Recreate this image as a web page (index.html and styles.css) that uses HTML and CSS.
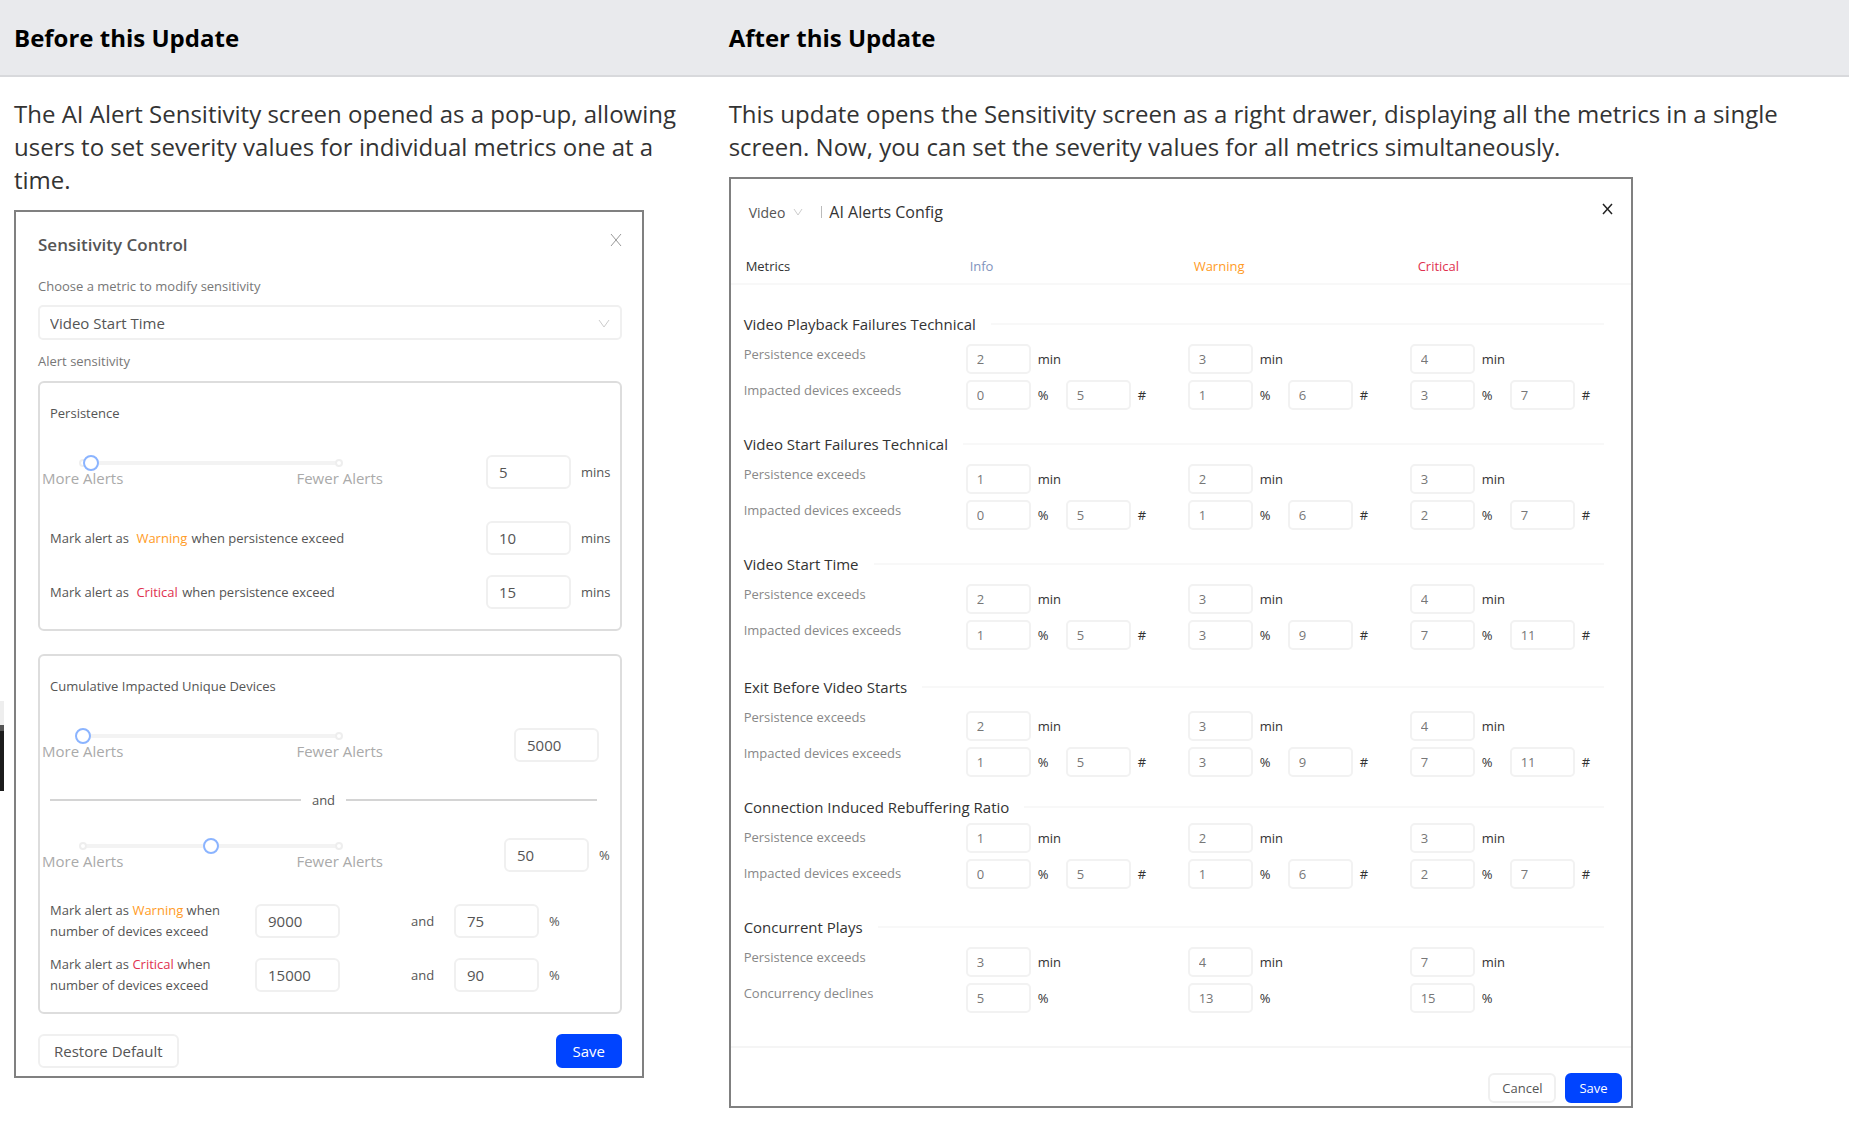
FILE: index.html
```html
<!DOCTYPE html>
<html lang="en">

<head>
    <meta charset="UTF-8">
    <meta name="viewport" content="width=device-width, initial-scale=1.0">
    <title>AI Alerts Sensitivity Update</title>
    <link rel="stylesheet" href="styles.css">
</head>

<body>

    <div class="edge-tab"></div>

    <table class="compare">
        <thead>
            <tr>
                <th class="col-before">Before this Update</th>
                <th>After this Update</th>
            </tr>
        </thead>
        <tbody>
            <tr>
                <td>
                    <p class="intro">The AI Alert Sensitivity screen opened as a pop-up, allowing users to set severity values for individual metrics one at a time.</p>

                    <div class="popup">
                        <div class="popup-head">
                            <h2>Sensitivity Control</h2>
                            <button class="close" aria-label="Close">
                                <svg width="12" height="14" viewBox="0 0 12 14"><path d="M1 1l10 12M11 1L1 13" /></svg>
                            </button>
                        </div>

                        <label class="caption" for="metric">Choose a metric to modify sensitivity</label>
                        <div class="select-wrap">
                            <select id="metric">
                                <option>Video Start Time</option>
                            </select>
                            <svg class="chevron" width="12" height="9" viewBox="0 0 12 9"><path d="M1 1l5 7 5-7" /></svg>
                        </div>
                        <p class="caption sub">Alert sensitivity</p>

                        <div class="box">
                            <h3>Persistence</h3>
                            <div class="slide-row">
                                <div class="slide">
                                    <div class="slider"><input type="range" value="3" aria-label="Persistence"></div>
                                    <div class="ends"><span>More Alerts</span><span>Fewer Alerts</span></div>
                                </div>
                                <div class="value"><input type="text" id="pInfo" value="5"><label class="unit" for="pInfo">mins</label></div>
                            </div>
                            <div class="mark-row">
                                <label for="pWarn">Mark alert as <span class="wide warning">Warning</span> when persistence exceed</label>
                                <div class="value"><input type="text" id="pWarn" value="10"><span class="unit">mins</span></div>
                            </div>
                            <div class="mark-row">
                                <label for="pCrit">Mark alert as <span class="wide critical">Critical</span> when persistence exceed</label>
                                <div class="value"><input type="text" id="pCrit" value="15"><span class="unit">mins</span></div>
                            </div>
                        </div>

                        <div class="box devices">
                            <h3>Cumulative Impacted Unique Devices</h3>
                            <div class="slide-row count">
                                <div class="slide">
                                    <div class="slider"><input type="range" value="0" aria-label="Number of devices"></div>
                                    <div class="ends"><span>More Alerts</span><span>Fewer Alerts</span></div>
                                </div>
                                <div class="value"><input type="text" value="5000" aria-label="Number of devices"></div>
                            </div>
                            <div class="and-line"><span>and</span></div>
                            <div class="slide-row percent">
                                <div class="slide">
                                    <div class="slider"><input type="range" value="50" aria-label="Percent of devices"></div>
                                    <div class="ends"><span>More Alerts</span><span>Fewer Alerts</span></div>
                                </div>
                                <div class="value"><input type="text" id="dPct" value="50"><label class="unit" for="dPct">%</label></div>
                            </div>
                            <div class="pair-row">
                                <label for="dWarn">Mark alert as <span class="warning">Warning</span> when<br>number of devices exceed</label>
                                <input type="text" id="dWarn" value="9000">
                                <label class="and" for="dWarnPct">and</label>
                                <input type="text" id="dWarnPct" value="75">
                                <span class="unit">%</span>
                            </div>
                            <div class="pair-row">
                                <label for="dCrit">Mark alert as <span class="critical">Critical</span> when<br>number of devices exceed</label>
                                <input type="text" id="dCrit" value="15000">
                                <label class="and" for="dCritPct">and</label>
                                <input type="text" id="dCritPct" value="90">
                                <span class="unit">%</span>
                            </div>
                        </div>

                        <div class="popup-foot">
                            <button class="btn">Restore Default</button>
                            <button class="btn primary">Save</button>
                        </div>
                    </div>
                </td>

                <td>
                    <p class="intro">This update opens the Sensitivity screen as a right drawer, displaying all the metrics in a single screen. Now, you can set the severity values for all metrics simultaneously.</p>

                    <div class="drawer">
                        <div class="drawer-head">
                            <button class="product">Video
                                <svg class="chevron" width="10" height="8" viewBox="0 0 10 8"><path d="M1 1l4 6 4-6" /></svg>
                            </button>
                            <span class="bar"></span>
                            <h2>AI Alerts Config</h2>
                            <button class="close dark" aria-label="Close">
                                <svg width="11" height="12" viewBox="0 0 11 12"><path d="M1 1l9 10M10 1L1 11" /></svg>
                            </button>
                        </div>

                        <div class="levels">
                            <span>Metrics</span>
                            <span class="info">Info</span>
                            <span class="warning">Warning</span>
                            <span class="critical">Critical</span>
                        </div>

                        <div class="metrics" id="metrics"></div>

                        <div class="drawer-foot">
                            <button class="btn">Cancel</button>
                            <button class="btn primary">Save</button>
                        </div>
                    </div>
                </td>
            </tr>
        </tbody>
    </table>

    <script>
        // Each row: label, units, then the values for info, warning and critical
        const metrics = [
            {
                name: "Video Playback Failures Technical",
                rows: [
                    ["Persistence exceeds", ["min"], [[2], [3], [4]]],
                    ["Impacted devices exceeds", ["%", "#"], [[0, 5], [1, 6], [3, 7]]]
                ]
            },
            {
                name: "Video Start Failures Technical",
                rows: [
                    ["Persistence exceeds", ["min"], [[1], [2], [3]]],
                    ["Impacted devices exceeds", ["%", "#"], [[0, 5], [1, 6], [2, 7]]]
                ]
            },
            {
                name: "Video Start Time",
                rows: [
                    ["Persistence exceeds", ["min"], [[2], [3], [4]]],
                    ["Impacted devices exceeds", ["%", "#"], [[1, 5], [3, 9], [7, 11]]]
                ]
            },
            {
                name: "Exit Before Video Starts",
                spacing: "loose",
                rows: [
                    ["Persistence exceeds", ["min"], [[2], [3], [4]]],
                    ["Impacted devices exceeds", ["%", "#"], [[1, 5], [3, 9], [7, 11]]]
                ]
            },
            {
                name: "Connection Induced Rebuffering Ratio",
                spacing: "tight",
                rows: [
                    ["Persistence exceeds", ["min"], [[1], [2], [3]]],
                    ["Impacted devices exceeds", ["%", "#"], [[0, 5], [1, 6], [2, 7]]]
                ]
            },
            {
                name: "Concurrent Plays",
                rows: [
                    ["Persistence exceeds", ["min"], [[3], [4], [7]]],
                    ["Concurrency declines", ["%"], [[5], [13], [15]]]
                ]
            }
        ];

        function rowHtml(row, id) {
            const [label, units, levels] = row;
            const cells = levels.map((values, level) => {
                const fields = values.map((value, i) => {
                    const fieldId = `${id}-${level}-${i}`;
                    return `<input type="text" id="${fieldId}" value="${value}" aria-label="${label} ${units[i]}"><span class="unit">${units[i]}</span>`;
                });
                return `<div class="cell">${fields.join("")}</div>`;
            });
            return `<div class="row"><label for="${id}-0-0">${label}</label>${cells.join("")}</div>`;
        }

        document.getElementById("metrics").innerHTML = metrics.map((metric, m) => `
            <section class="metric ${metric.spacing || ""}">
                <h3>${metric.name}</h3>
                ${metric.rows.map((row, r) => rowHtml(row, `m${m}-${r}`)).join("")}
            </section>`).join("");
    </script>

</body>

</html>
```
FILE: styles.css
```css
* {
    box-sizing: border-box;
}

body {
    margin: 0;
    background-color: #fff;
    color: #333;
    font-family: "Open Sans", "Noto Sans", sans-serif;
    font-size: 13px;
}

h2,
h3,
p {
    margin: 0;
}

input,
select,
button {
    font-family: inherit;
    color: inherit;
}

button {
    padding: 0;
    border: none;
    background: none;
    cursor: pointer;
}

svg {
    display: block;
    fill: none;
    stroke: #999;
}

.info {
    color: #8093bd;
}

.warning {
    color: #ff9b26;
}

.critical {
    color: #e0314f;
}

/* Sliver of the collapsed side panel, over the page edge */
.edge-tab {
    position: absolute;
    left: 0;
    top: 701px;
    width: 4px;
    height: 90px;
    background: linear-gradient(#eee 24px, #555 24px, #555 30px, #1c1c1c 30px);
}

/* Comparison table */
.compare {
    width: 100%;
    border-collapse: collapse;
    table-layout: fixed;
}

.compare th {
    height: 76px;
    padding: 0 14px;
    background-color: #e9eaed;
    border-bottom: 2px solid #d8d9dc;
    color: #000;
    font-size: 24px;
    font-weight: 700;
    text-align: left;
}

.compare .col-before {
    width: 38.65%;
}

.compare td {
    padding: 20px 14px 0;
    vertical-align: top;
}

.intro {
    margin-bottom: 14px;
    font-size: 24px;
    line-height: 33px;
}

/* Before: pop-up */
.popup {
    max-width: 630px;
    padding: 20px 20px 8px 22px;
    border: 2px solid #808080;
    color: #555;
}

.popup-head {
    display: flex;
    justify-content: space-between;
    align-items: flex-start;
    padding: 1px 0 19px;
}

.popup-head h2 {
    font-size: 17px;
    font-weight: 600;
    line-height: 24px;
    color: #555;
}

.caption {
    display: block;
    line-height: 20px;
    color: #777;
}

.sub {
    margin: 11px 0 10px;
}

.select-wrap {
    position: relative;
    margin-top: 9px;
}

.select-wrap select {
    width: 100%;
    height: 35px;
    padding: 0 10px;
    border: 2px solid #f0f0f0;
    border-radius: 5px;
    background: #fff;
    appearance: none;
    font-size: 15px;
}

.chevron {
    stroke: #ccc;
}

.select-wrap .chevron {
    position: absolute;
    right: 12px;
    top: 14px;
}

.box {
    padding: 20px 9px 20px 10px;
    border: 2px solid #ddd;
    border-radius: 6px;
}

.box h3 {
    font-size: 13px;
    font-weight: 400;
    line-height: 20px;
}

.box input[type="text"] {
    width: 85px;
    height: 34px;
    padding: 0 11px;
    border: 2px solid #f0f0f0;
    border-radius: 6px;
    font-size: 15px;
}

.slide-row {
    display: flex;
    justify-content: space-between;
    padding-top: 30px;
}

.slide {
    width: 341px;
    margin-left: -8px;
}

.slider {
    position: relative;
    width: 272px;
    height: 16px;
    margin: 2px 0 0 33px;
    background: linear-gradient(#f3f3f3, #f3f3f3) center / 256px 4px no-repeat;
}

.slider::before,
.slider::after {
    content: "";
    position: absolute;
    top: 4px;
    left: 4px;
    width: 4px;
    height: 4px;
    border: 2px solid #eee;
    border-radius: 50%;
    background-color: #fff;
}

.slider::after {
    left: auto;
    right: 4px;
}

.slider input {
    position: relative;
    z-index: 1;
    display: block;
    width: 100%;
    height: 16px;
    margin: 0;
    appearance: none;
    background: transparent;
}

.slider input::-webkit-slider-thumb {
    appearance: none;
    width: 16px;
    height: 16px;
    border: 2px solid #8bb4ff;
    border-radius: 50%;
    background-color: #fff;
}

.ends {
    display: flex;
    justify-content: space-between;
    font-size: 15px;
    line-height: 14px;
    color: #aaa;
}

.value {
    display: flex;
    align-items: center;
}

.slide-row .value {
    margin-top: 2px;
}

.value .unit {
    width: 40px;
    padding-left: 10px;
}

.mark-row {
    display: flex;
    justify-content: space-between;
    align-items: center;
    margin-top: 20px;
}

.slide-row + .mark-row {
    margin-top: 32px;
}

.wide {
    margin: 0 1px 0 4px;
}

.devices {
    margin-top: 23px;
    padding-bottom: 16px;
}

.count .value {
    padding-right: 12px;
}

.percent {
    padding-top: 26px;
}

.percent .unit {
    width: 22px;
}

.and-line {
    display: flex;
    align-items: center;
    gap: 11px;
    margin: 28px 14px 0 0;
    line-height: 20px;
}

.and-line::before,
.and-line::after {
    content: "";
    flex: 1;
    height: 2px;
    background-color: #d4d4d4;
}

.pair-row {
    display: flex;
    align-items: center;
    margin-top: 12px;
    line-height: 21px;
}

.slide-row + .pair-row {
    margin-top: 28px;
}

.pair-row label:first-child {
    width: 205px;
}

.pair-row .and {
    width: 114px;
    padding-left: 71px;
}

.pair-row .unit {
    padding-left: 10px;
}

.popup-foot,
.drawer-foot {
    display: flex;
    justify-content: space-between;
    margin-top: 20px;
}

.btn {
    height: 34px;
    padding: 0 14px;
    border: 2px solid #f0f0f0;
    border-radius: 6px;
    background-color: #fff;
    color: #555;
    font-size: 15px;
}

.btn.primary {
    padding: 0 15px;
    border-color: #0044ff;
    background-color: #0044ff;
    color: #fff;
}

/* After: right drawer */
.drawer {
    max-width: 904px;
    border: 2px solid #808080;
}

.drawer-head {
    display: flex;
    align-items: center;
    padding: 21px 18px 0 18px;
    line-height: 24px;
}

.product {
    display: flex;
    align-items: center;
    gap: 8px;
    font-size: 14px;
    color: #555;
}

.bar {
    width: 1px;
    height: 12px;
    margin: 0 7px 0 18px;
    background-color: #bbb;
}

.drawer-head h2 {
    font-size: 16px;
    font-weight: 400;
}

.close.dark {
    margin: 0 0 6px auto;
}

.close.dark svg {
    stroke: #222;
    stroke-width: 1.5;
}

.levels {
    display: grid;
    grid-template-columns: repeat(4, 224px);
    margin-top: 32px;
    padding: 0 0 7px 15px;
    border-bottom: 2px solid #f8f8f8;
    font-weight: 500;
    line-height: 20px;
}

.metrics {
    padding: 29px 27px 0 13px;
}

.metric {
    padding-bottom: 18px;
}

.metric h3 {
    display: flex;
    align-items: center;
    gap: 15px;
    margin-bottom: 10px;
    font-size: 15px;
    font-weight: 400;
    line-height: 20px;
}

.metric h3::after {
    content: "";
    flex: 1;
    height: 2px;
    background-color: #f8f8f8;
}

.row {
    display: grid;
    grid-template-columns: repeat(4, 222px);
    height: 36px;
}

.row label {
    line-height: 20px;
    color: #888;
}

.cell {
    display: flex;
    align-items: center;
    height: 30px;
}

.cell input {
    width: 65px;
    height: 30px;
    padding: 0 9px;
    border: 2px solid #f2f2f2;
    border-radius: 5px;
    color: #777;
    font-size: 13px;
}

.cell .unit {
    width: 35px;
    padding-left: 7px;
}

.loose {
    padding-bottom: 14px;
}

.loose h3 {
    margin: 3px 0 14px;
}

.loose .row label {
    line-height: 12px;
}

.tight {
    padding-bottom: 22px;
}

.tight h3 {
    margin-bottom: 6px;
}

.tight .row label {
    line-height: 28px;
}

.drawer-foot {
    justify-content: flex-end;
    gap: 9px;
    margin-top: 9px;
    padding: 25px 9px 3px;
    border-top: 2px solid #f5f5f5;
}

.drawer-foot .btn {
    height: 30px;
    padding: 0 12px;
    font-size: 13px;
}
```
